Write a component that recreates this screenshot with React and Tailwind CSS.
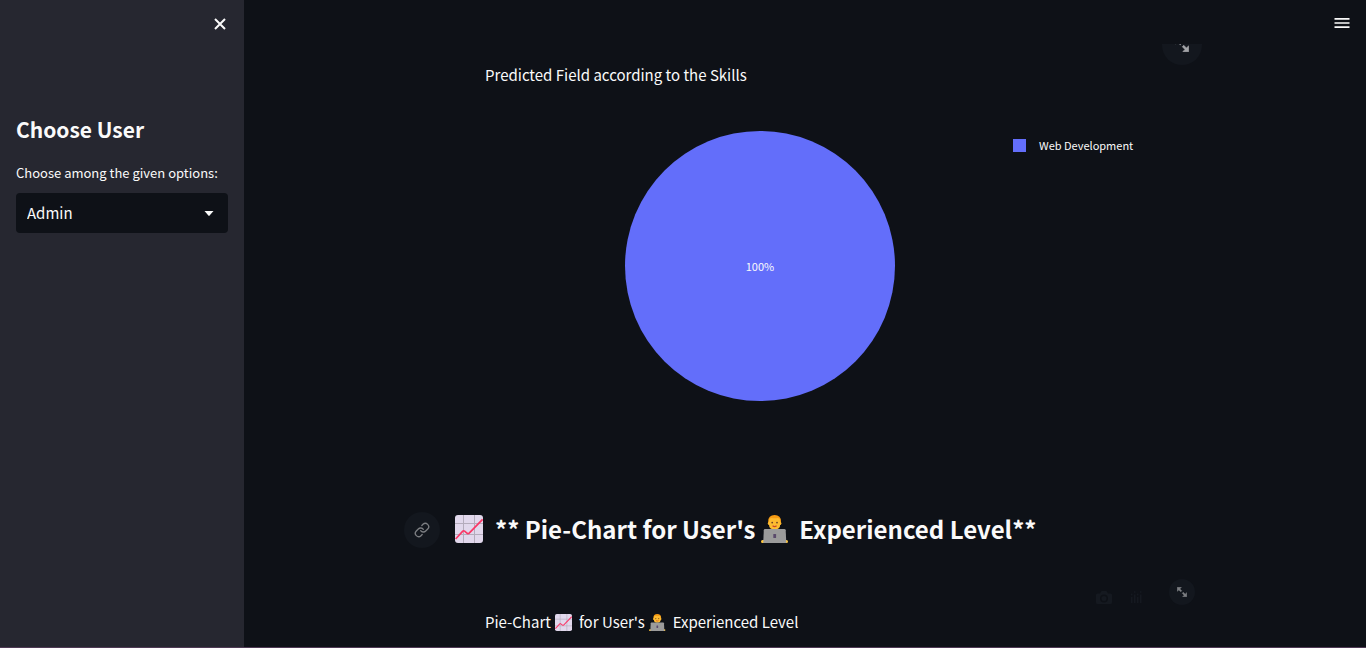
import { useState } from "react";

function ChartEmoji({ className }) {
  return (
    <svg viewBox="0 0 28 28" role="img" aria-label="Chart increasing" className={className}>
      <rect width="28" height="28" rx="3" fill="#e1d8ec" />
      <path d="M8.5 0v28M19.5 0v28M0 8.5h28M0 19.5h28" stroke="#b4acbc" strokeWidth="1" fill="none" />
      <path d="M0.6 24L7.8 16.2Q8.6 15.4 9.6 16.2L12.2 18.3Q13.2 19 14.2 18.2L27.6 4.4" fill="none" stroke="#fb3766" strokeWidth="1.7" />
    </svg>
  );
}

function TechnologistEmoji({ className }) {
  return (
    <svg viewBox="0 0 28 28" role="img" aria-label="Technologist" className={className}>
      <path d="M7.2 9V6.6Q7.2 0 13.6 0T20 6.600V9Z" fill="#f59a13" />
      <rect x="6.800" y="6.600" width="13.600" height="3.600" rx="1.800" fill="#fbb52c" />
      <path d="M8 6Q8.200 3 10.600 3Q14 3.600 16.800 3Q19.200 3.200 19.200 6V9.400Q19.200 14.400 13.600 14.400T8 9.400Z" fill="#fdbb30" />
      <circle cx="11.200" cy="7.600" r="0.900" fill="#6e4323" />
      <circle cx="16" cy="7.600" r="0.900" fill="#6e4323" />
      <path d="M11.600 10.800Q13.600 12.400 15.600 10.800" stroke="#c8452d" strokeWidth="1.100" fill="none" />
      <rect x="0" y="25" width="5" height="3" rx="1.500" fill="#ffc83d" />
      <rect x="22" y="25" width="5" height="3" rx="1.500" fill="#ffc83d" />
      <path d="M4 14h19.400q1.200 0 1.300 1.200l0.600 12.800H2.200l0.600-12.800q0.100-1.200 1.200-1.200Z" fill="#9b9b9b" />
      <rect x="12.300" y="19" width="2.800" height="4" rx="0.600" fill="#5a4a6b" />
    </svg>
  );
}

function FullscreenIcon({ className }) {
  return (
    <svg viewBox="0 0 8 8" fill="currentColor" aria-hidden="true" className={className}>
      <path
        d="M0.200 0.200v3.300l1.200-1.200L3 3.800l0.800-0.800-1.500-1.500L3.500 0.200zM5 4.200L4.200 5l1.500 1.500L4.500 7.800h3.300V4.500L6.500 5.700z"
        stroke="currentColor"
        strokeWidth="0.400"
      />
    </svg>
  );
}

function Sidebar() {
  const [user, setUser] = useState("Admin");
  return (
    <aside className="flex w-[244px] shrink-0 flex-col bg-[#262730] px-4">
      <div className="flex h-12 items-center justify-end">
        <button type="button" aria-label="Close sidebar" className="flex size-4 items-center justify-center">
          <svg viewBox="0 0 12 12" className="size-3" aria-hidden="true">
            <path d="M1 1l10 10M11 1L1 11" stroke="currentColor" strokeWidth="2" fill="none" />
          </svg>
        </button>
      </div>
      <h2 className="mt-[63px] text-[21px] leading-9 font-bold">Choose User</h2>
      <label htmlFor="user" className="mt-4 text-[13px] leading-5">
        Choose among the given options:
      </label>
      <div className="relative mt-2.5">
        <select
          id="user"
          value={user}
          onChange={(e) => setUser(e.target.value)}
          className="h-10 w-full appearance-none rounded bg-[#0e1117] pl-[11px] text-[15px]"
        >
          <option>Admin</option>
          <option>Normal User</option>
        </select>
        <svg viewBox="0 0 10 5" className="pointer-events-none absolute top-[18px] right-3.5 h-[5px] w-2.5" aria-hidden="true">
          <path d="M0.500 0h9L5.600 4.600q-0.600 0.600-1.200 0Z" fill="currentColor" />
        </svg>
      </div>
    </aside>
  );
}

export default function App() {
  return (
    <div className="flex h-screen flex-col bg-[#0e1117] font-['Noto_Sans_CJK_SC',sans-serif] text-[#fafafa]">
      <div className="flex min-h-0 flex-1">
        <Sidebar />
        <div className="flex min-w-0 flex-1 flex-col">
          <header className="flex h-11 shrink-0 items-center justify-end px-4">
            <button type="button" aria-label="Main menu" className="mt-0.5 flex h-4 w-4 items-center justify-center">
              <svg viewBox="0 0 16 10" className="h-2.5 w-4" aria-hidden="true">
                <path d="M0.500 0.900h15M0.500 5h15M0.500 9.100h15" stroke="currentColor" strokeWidth="1.700" />
              </svg>
            </button>
          </header>
          <main className="min-h-0 flex-1 overflow-hidden">
            <div className="mx-auto w-full max-w-[736px] px-4">
              <section className="relative pt-[19px]">
                <button
                  type="button"
                  aria-label="View chart fullscreen"
                  className="absolute -top-[19px] -right-[45px] flex size-10 items-center justify-center rounded-full bg-[#13171e] text-[#a3a4a7]"
                >
                  <FullscreenIcon className="size-3.5" />
                </button>
                <h3 className="pl-8 text-[15px] leading-6">Predicted Field according to the Skills</h3>
                <div className="mt-11 flex items-start pl-[172px]">
                  <svg viewBox="0 0 270 270" className="size-[270px] shrink-0" role="img" aria-label="Pie chart">
                    <circle cx="135" cy="135" r="135" fill="#636efa" />
                    <text x="135" y="140" textAnchor="middle" fontSize="11" fill="#fafafa">
                      100%
                    </text>
                  </svg>
                  <div className="mt-1.5 ml-[118px] flex h-4 items-center gap-[13px] text-[11px] leading-4 whitespace-nowrap">
                    <span className="size-[13px] bg-[#636efa]" />
                    Web Development
                  </div>
                </div>
              </section>

              <div className="mt-[109px] -ml-[49px] flex h-10 items-center gap-[15px]">
                <a
                  href="#experience-level"
                  aria-label="Link to this section"
                  className="flex size-9 shrink-0 items-center justify-center rounded-full bg-[#13171e] text-[#7c7e82]"
                >
                  <svg viewBox="0 0 24 24" className="size-4" fill="none" stroke="currentColor" strokeWidth="2" strokeLinecap="round" strokeLinejoin="round" aria-hidden="true">
                    <path d="M10 13a5 5 0 0 0 7.540.540l3-3a5 5 0 0 0-7.070-7.070l-1.720 1.710" />
                    <path d="M14 11a5 5 0 0 0-7.540-.540l-3 3a5 5 0 0 0 7.070 7.070l1.710-1.710" />
                  </svg>
                </a>
                <h2 id="experience-level" className="flex items-center pb-0.5 text-[24px] leading-10 font-bold whitespace-nowrap">
                  <ChartEmoji className="mr-3 size-7" />
                  ** Pie-Chart for User&apos;s
                  <TechnologistEmoji className="mr-2.5 ml-1.5 size-7" />
                  Experienced Level**
                </h2>
              </div>

              <section className="relative pt-[60px]">
                <div className="absolute top-[29px] -right-[38px] flex items-center text-[#151920]">
                  <button type="button" aria-label="Download plot as png" className="mt-2.5 mr-[18px]">
                    <svg viewBox="0 0 16 13" className="h-[13px] w-4" fill="currentColor" aria-hidden="true">
                      <path fillRule="evenodd" d="M1.500 2.500H4L5.500 0h5L12 2.500h2.500q1.500 0 1.500 1.500v7.500q0 1.500-1.500 1.500h-13Q0 13 0 11.500V4q0-1.500 1.500-1.500ZM8 3.500a4 4 0 1 0 0 8 4 4 0 0 0 0-8Zm0 1.500a2.500 2.500 0 1 1 0 5 2.500 2.500 0 0 1 0-5Z" />
                    </svg>
                  </button>
                  <button type="button" aria-label="Produced with Plotly" className="mt-2.5 mr-[27px]">
                    <svg viewBox="0 0 12 12" className="size-3" fill="currentColor" aria-hidden="true">
                      <path d="M1 6h1.500v6H1zM4 3.500h1.500V12H4zM7 6h1.500v6H7zM10 3.500h1.500V12H10z" />
                      <circle cx="1.700" cy="3.500" r="0.900" />
                      <circle cx="4.700" cy="1" r="0.900" />
                      <circle cx="7.700" cy="3.500" r="0.900" />
                      <circle cx="10.700" cy="1" r="0.900" />
                    </svg>
                  </button>
                  <button
                    type="button"
                    aria-label="View chart fullscreen"
                    className="flex size-[26px] items-center justify-center rounded-full bg-[#13171e] text-[#7c7e82]"
                  >
                    <FullscreenIcon className="size-2.5" />
                  </button>
                </div>
                <h3 className="flex items-center pl-8 text-[15px] leading-6 whitespace-nowrap">
                  Pie-Chart
                  <ChartEmoji className="mr-[7px] ml-1 size-[17px]" />
                  for User&apos;s
                  <TechnologistEmoji className="mr-[7px] ml-1 size-[17px]" />
                  Experienced Level
                </h3>
              </section>
            </div>
          </main>
        </div>
      </div>
      <div className="h-px shrink-0 bg-[#4f3a55]" />
    </div>
  );
}
